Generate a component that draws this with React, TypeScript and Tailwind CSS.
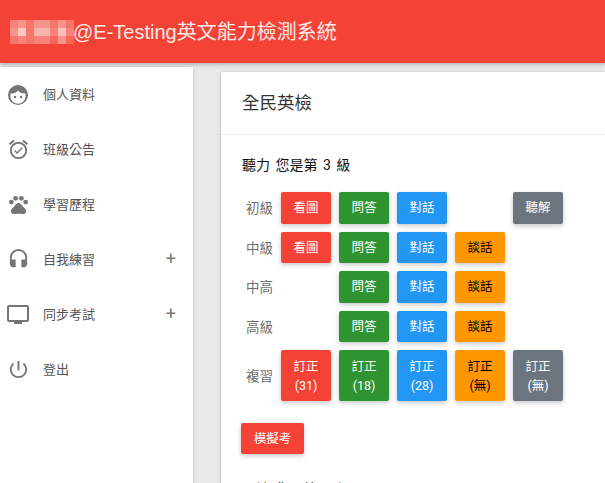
import { MdOutlineAlarmOn, MdPets, MdHeadset, MdOutlinePowerSettingsNew } from 'react-icons/md'
import type { ReactNode } from 'react'

const font = "font-['Roboto','Noto_Sans_CJK_TC',sans-serif]"

const red = 'bg-[#f44336] text-white'
const green = 'bg-[#2e9330] text-white'
const blue = 'bg-[#2196f3] text-white'
const orange = 'bg-[#ff9800] text-black'
const gray = 'bg-[#6c757d] text-white'

// pixelated user name in the header
const mosaic = [
  ['#f7837a', '#f8948c', '#f6766d', '#f8948c', '#f8948c', '#f6766d', '#f8948c', '#f6766d'],
  ['#f8948c', '#fcc8c3', '#f6766d', '#fab4ae', '#fab4ae', '#f7837a', '#fcc0bb', '#f7837a'],
  ['#f6766d', '#f7837a', '#f6766d', '#f7837a', '#f7837a', '#f6665b', '#f8948c', '#f6665b'],
]

function FaceIcon() {
  return (
    <svg viewBox="0 0 24 24" width="24" height="24" className="-ml-px">
      <circle cx="12" cy="12" r="10" fill="#757575" />
      <path
        fill="#fff"
        d="M4.4 13.2a7.6 7.6 0 0 0 15.2 0c0-1-.2-2-.5-2.9-3 .3-5.6-.7-7.1-2.9-1.2 2-3.8 3.1-7.1 3-.3.9-.5 1.8-.5 2.8z"
      />
      <circle cx="9" cy="14" r="1.25" fill="#757575" />
      <circle cx="15" cy="14" r="1.25" fill="#757575" />
    </svg>
  )
}

function MonitorIcon() {
  return (
    <svg viewBox="0 0 24 24" width="24" height="24" className="-ml-px">
      <rect x="2" y="3" width="20" height="15" rx="1" fill="none" stroke="#757575" strokeWidth="2" />
      <rect x="8" y="19" width="8" height="2" fill="#757575" />
    </svg>
  )
}

const menu: { icon: ReactNode; label: string; plus?: boolean }[] = [
  { icon: <FaceIcon />, label: '個人資料' },
  { icon: <MdOutlineAlarmOn />, label: '班級公告' },
  { icon: <MdPets />, label: '學習歷程' },
  { icon: <MdHeadset />, label: '自我練習', plus: true },
  { icon: <MonitorIcon />, label: '同步考試', plus: true },
  { icon: <MdOutlinePowerSettingsNew />, label: '登出' },
]

function Btn({ color, children, tall }: { color: string; children: ReactNode; tall?: boolean }) {
  return (
    <button
      className={`${color} w-[50px] ${tall ? 'h-[51px] leading-[19px]' : 'h-[31.5px] pt-[2px]'} rounded-[2px] text-[12.5px] shadow-[0_2px_5px_rgba(0,0,0,0.22)] flex items-center justify-center text-center`}
    >
      {children}
    </button>
  )
}

function Gap() {
  return <div className="w-[50px]" />
}

function Row({ label, children }: { label: string; children: ReactNode }) {
  return (
    <div className="flex items-center">
      <div className="w-[40px] pl-[5px] pt-[1px] text-[13.5px] text-[#707070]">{label}</div>
      <div className="flex gap-2">{children}</div>
    </div>
  )
}

export default function App() {
  return (
    <div className={`${font} h-[483px] w-[605px] overflow-hidden bg-[#e9e9e9] flex flex-col`}>
      <header className="h-[63px] shrink-0 bg-[#f44336] flex items-center pl-[10px] text-[20px] text-[#fde9e7] shadow-[0_2px_4px_rgba(0,0,0,0.2)] relative">
        <div className="flex flex-col w-[63px] h-[24px] shrink-0">
          {mosaic.map((row, i) => (
            <div key={i} className="flex h-[8px]">
              {row.map((c, j) => (
                <div key={j} className="w-[8px] h-[8px] shrink-0" style={{ background: c }} />
              ))}
            </div>
          ))}
        </div>
        <span className="font-['Liberation_Sans','Noto_Sans_CJK_TC',sans-serif]">@E-Testing英文能力檢測系統</span>
      </header>

      <div className="flex-1 flex min-h-0">
        <aside className="w-[193px] shrink-0 mt-[4px] bg-white shadow-[0_1px_4px_rgba(0,0,0,0.2)]">
          {menu.map(m => (
            <div key={m.label} className="h-[55px] flex items-center pl-[7px] pr-[17px] text-[#555] text-[13px]">
              <span className="w-[36px] text-[23px] text-[#757575] shrink-0">{m.icon}</span>
              <span className="flex-1">{m.label}</span>
              {m.plus && <span className="text-[18px] text-[#777] leading-none -mt-[2px]">+</span>}
            </div>
          ))}
        </aside>

        <main className="flex-1 min-w-0 pl-[28px] pt-[9px]">
          <div className="bg-white h-[500px] shadow-[0_1px_4px_rgba(0,0,0,0.2)]">
            <div className="h-[63px] flex items-center pl-[21px] text-[17.5px] text-[#333] border-b border-[#eeeeee]">全民英檢</div>
            <div className="pl-[20px] pt-[20px]">
              <h3 className="ml-px text-[14px] leading-[20px] font-normal text-[#111] [word-spacing:2px]">聽力 您是第 3 級</h3>
              <div className="mt-[17px] flex flex-col gap-2">
                <Row label="初級">
                  <Btn color={red}>看圖</Btn>
                  <Btn color={green}>問答</Btn>
                  <Btn color={blue}>對話</Btn>
                  <Gap />
                  <Btn color={gray}>聽解</Btn>
                </Row>
                <Row label="中級">
                  <Btn color={red}>看圖</Btn>
                  <Btn color={green}>問答</Btn>
                  <Btn color={blue}>對話</Btn>
                  <Btn color={orange}>談話</Btn>
                </Row>
                <Row label="中高">
                  <Gap />
                  <Btn color={green}>問答</Btn>
                  <Btn color={blue}>對話</Btn>
                  <Btn color={orange}>談話</Btn>
                </Row>
                <Row label="高級">
                  <Gap />
                  <Btn color={green}>問答</Btn>
                  <Btn color={blue}>對話</Btn>
                  <Btn color={orange}>談話</Btn>
                </Row>
                <Row label="複習">
                  <Btn tall color={red}>訂正<br />(31)</Btn>
                  <Btn tall color={green}>訂正<br />(18)</Btn>
                  <Btn tall color={blue}>訂正<br />(28)</Btn>
                  <Btn tall color={orange}>訂正<br />(無)</Btn>
                  <Btn tall color={gray}>訂正<br />(無)</Btn>
                </Row>
              </div>
              <button className={`${red} mt-[22px] w-[63px] h-[31px] pt-[1px] rounded-[2px] text-[12.5px] shadow-[0_2px_5px_rgba(0,0,0,0.22)]`}>模擬考</button>
              <h3 className="ml-px mt-[25px] text-[14px] leading-[20px] font-normal text-[#111] [word-spacing:2px]">閱讀 您是第 3 級</h3>
            </div>
          </div>
        </main>
      </div>
    </div>
  )
}
